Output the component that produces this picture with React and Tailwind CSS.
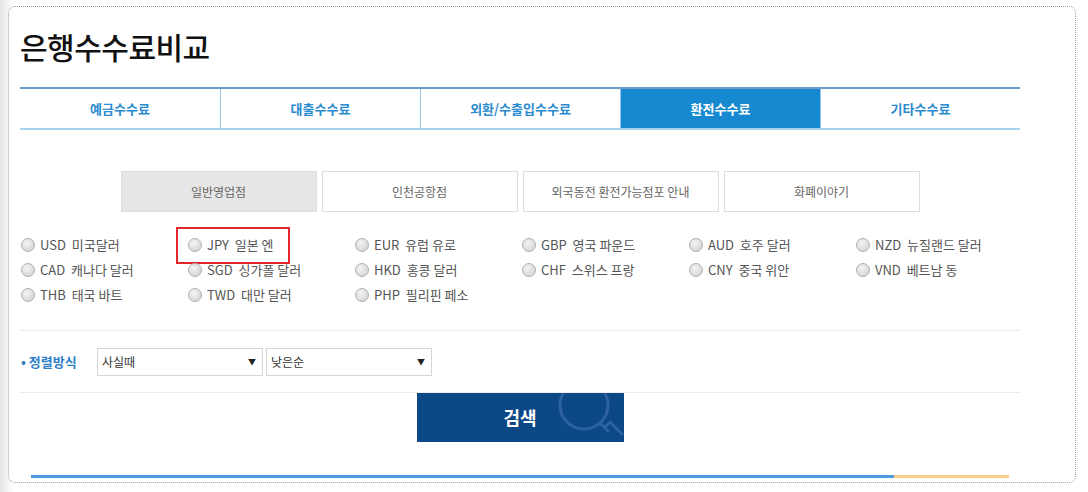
import { useState } from 'react';

const FONT = { fontFamily: '"Noto Sans CJK KR", "Noto Sans", sans-serif' };

const tabs = ['예금수수료', '대출수수료', '외환/수출입수수료', '환전수수료', '기타수수료'];
const subTabs = ['일반영업점', '인천공항점', '외국동전 환전가능점포 안내', '화폐이야기'];
const currencies = [
  ['USD', '미국달러'], ['JPY', '일본 엔'], ['EUR', '유럽 유로'], ['GBP', '영국 파운드'], ['AUD', '호주 달러'], ['NZD', '뉴질랜드 달러'],
  ['CAD', '캐나다 달러'], ['SGD', '싱가폴 달러'], ['HKD', '홍콩 달러'], ['CHF', '스위스 프랑'], ['CNY', '중국 위안'], ['VND', '베트남 동'],
  ['THB', '태국 바트'], ['TWD', '대만 달러'], ['PHP', '필리핀 페소'],
];

function Radio({ checked }) {
  return (
    <span className="w-[14px] h-[14px] rounded-full border border-[#b0b0b0] bg-[radial-gradient(circle_at_40%_35%,#f4f4f4,#cdcdcd)] shrink-0 flex items-center justify-center">
      {checked && <span className="w-[5px] h-[5px] rounded-full bg-[#444]" />}
    </span>
  );
}

function Select({ value }) {
  return (
    <div className="w-[166px] h-[28px] border border-[#d6d6d6] bg-white flex items-center justify-between pl-[4px] pr-[6px] text-[12px] text-[#333]">
      <span>{value}</span>
      <span className="text-[8px] text-[#222]">▼</span>
    </div>
  );
}

export default function App() {
  const [tab, setTab] = useState(3);
  const [sub, setSub] = useState(0);
  const [cur, setCur] = useState(null);

  return (
    <div className="w-[1088px] h-[492px] overflow-hidden bg-[linear-gradient(to_right,#e4e4e4,#f6f6f6_8px,#ffffff_14px)] pt-[6px] pl-[8px]" style={FONT}>
      <div className="w-[1068px] h-[477px] bg-white border border-dotted border-[#9a9a9a] rounded-[7px] px-[11px]">
        <div className="w-[1000px] flex flex-col">
          <h1 className="pt-[19px] text-[30px] leading-[40px] font-medium text-[#111] tracking-[-0.5px]">은행수수료비교</h1>

          <div className="mt-[21px] flex border-t-2 border-t-[#6e9cc8] border-b-2 border-b-[#a6d3ef]">
            {tabs.map((t, i) => (
              <button
                key={t}
                onClick={() => setTab(i)}
                className={`w-[200px] h-[39px] text-[13px] font-bold flex items-center justify-center ${i > 0 ? 'border-l border-l-[#8fc4e6]' : ''} ${tab === i ? 'bg-[#1789d1] text-white' : 'bg-white text-[#2a8bd0]'}`}
              >
                {t}
              </button>
            ))}
          </div>

          <div className="mt-[41px] flex justify-center gap-[5px]">
            {subTabs.map((t, i) => (
              <button
                key={t}
                onClick={() => setSub(i)}
                className={`w-[196px] h-[41px] border border-[#dddddd] text-[12px] text-[#666] flex items-center justify-center ${sub === i ? 'bg-[#e6e6e6]' : 'bg-white'}`}
              >
                {t}
              </button>
            ))}
          </div>

          <div className="mt-[20px] grid grid-cols-[repeat(6,167px)] relative">
            {currencies.map(([code, name], i) => (
              <label key={code} onClick={() => setCur(i)} className="h-[25px] flex items-center gap-[5px] pl-[1px] text-[13px] text-[#555] cursor-pointer relative">
                <Radio checked={cur === i} />
                <span>{code}&nbsp; {name}</span>
                {code === 'JPY' && (
                  <span className="absolute left-[-11px] top-[-5px] w-[114px] h-[37px] border-2 border-[#e3262b] pointer-events-none" />
                )}
              </label>
            ))}
          </div>

          <div className="mt-[23px] h-[63px] border-t border-b border-[#ececec] flex items-center">
            <span className="text-[13px] font-bold text-[#2f7fc9] w-[77px] pl-[1px]">• 정렬방식</span>
            <div className="flex gap-[3px]">
              <Select value="사실때" />
              <Select value="낮은순" />
            </div>
          </div>

          <div className="flex justify-center">
            <button className="relative w-[207px] h-[49px] bg-[#0c4886] text-white text-[18px] font-bold overflow-hidden flex items-center justify-center">
              <span className="relative z-10">검색</span>
              <svg className="absolute left-[130px] top-[-14px]" width="80" height="70" viewBox="0 0 80 70" fill="none">
                <circle cx="37" cy="26" r="24" stroke="#2d629c" strokeWidth="3" />
                <path d="M53 44 L62 53 M57 49 L63 43 L76 56" stroke="#2d629c" strokeWidth="3" />
              </svg>
            </button>
          </div>

          <div className="mt-[33px] ml-[11px] flex h-[3px]">
            <div className="w-[863px] bg-[#4c9be0]" />
            <div className="w-[115px] bg-[#fbcf86]" />
          </div>
        </div>
      </div>
    </div>
  );
}
